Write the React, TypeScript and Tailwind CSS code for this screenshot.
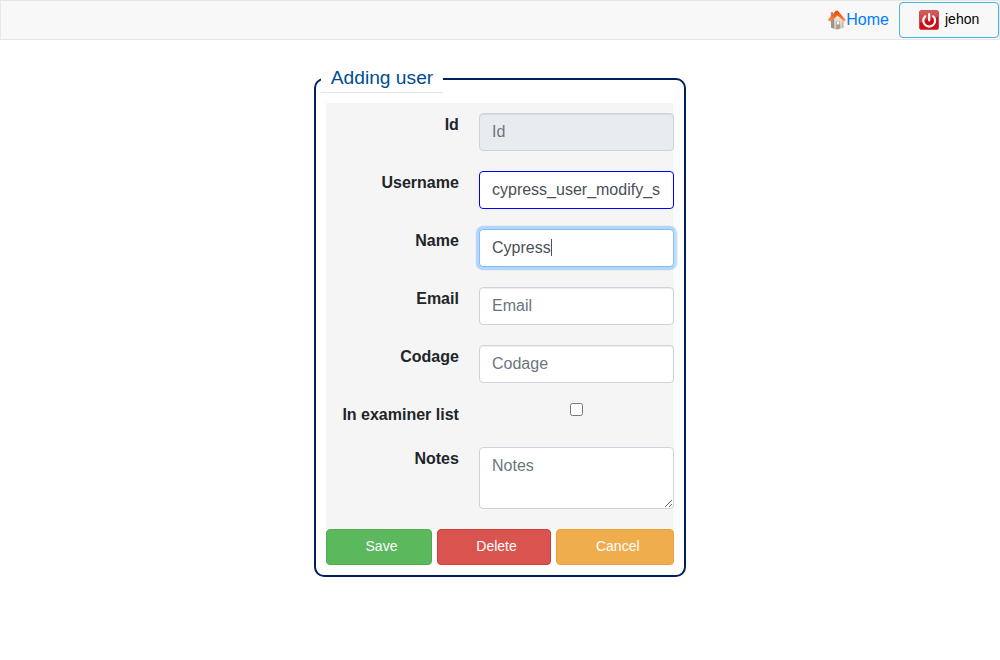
import React from "react";

const control =
  "block w-[195px] rounded border border-[#ced4da] bg-white px-3 text-base text-[#495057] placeholder-[#6c757d] shadow-[inset_0_1px_1px_rgba(0,0,0,0.075)] outline-none";

function Row({ label, children }: { label: string; children: React.ReactNode }) {
  return (
    <div className="flex items-start py-2.5">
      <label className="w-[132.9px] shrink-0 text-right text-base leading-6 font-bold text-[#212529]">{label}</label>
      <div className="relative ml-[20.1px] w-[195px]">{children}</div>
    </div>
  );
}

function HouseIcon() {
  return (
    <svg width="18" height="20" viewBox="0 0 18 20" className="overflow-visible" aria-hidden="true">
      <defs>
        <linearGradient id="roof" x1="0" y1="0" x2="0" y2="1">
          <stop offset="0" stopColor="#e8430c" />
          <stop offset="0.5" stopColor="#f36a24" />
          <stop offset="1" stopColor="#fa9a5c" />
        </linearGradient>
        <linearGradient id="wall" x1="0" y1="0" x2="0" y2="1">
          <stop offset="0" stopColor="#f1eeea" />
          <stop offset="1" stopColor="#c9c4bd" />
        </linearGradient>
      </defs>
      <path d="M2.8 2.2h2.2v4H2.8z" fill="#a08e86" />
      <path d="M8.8 4 15.2 10.5v7.6L8 19.6l-5-2.2V10z" fill="url(#wall)" />
      <path d="M3 10.5 6.2 7v11.8L3 17.4z" fill="#9a948f" />
      <path d="M8.2 11.4h3.8v7.3l-3.8.8z" fill="#b49d7b" />
      <path d="M8.9 11.6h2.4v2.8H8.9z" fill="#fffaf0" />
      <path d="M15 11v6.9" stroke="#aaa49e" strokeWidth=".8" />
      <path d="M7.8.8h2L17.8 10l-2 1.8-6.4-6-6.8 6L-.3 10z" fill="url(#roof)" />
      <path d="m9.6 5.8 6.2 5.8" stroke="#fbd0b2" strokeWidth=".7" />
    </svg>
  );
}

function PowerIcon() {
  return (
    <svg width="20" height="20" viewBox="0 0 20 20" aria-hidden="true">
      <defs>
        <linearGradient id="power" x1="0" y1="0" x2="0" y2="1">
          <stop offset="0" stopColor="#c9393b" />
          <stop offset="0.55" stopColor="#c80c12" />
          <stop offset="1" stopColor="#d60d13" />
        </linearGradient>
      </defs>
      <rect x=".4" y=".4" width="19.2" height="19.2" rx="2.2" fill="url(#power)" stroke="#b84144" strokeWidth=".8" />
      <path d="M1 1h18v6Q9 7 1 13z" fill="#fff" opacity=".2" />
      <path d="M6.2 6.3a5.9 5.9 0 1 0 8 0" fill="none" stroke="#fff" strokeWidth="2.2" strokeLinecap="round" />
      <path d="M10.2 4v6.4" stroke="#fff" strokeWidth="2.2" strokeLinecap="round" />
    </svg>
  );
}

export default function App() {
  return (
    <div className="min-h-[660px] bg-white font-['Liberation_Sans',Arial,sans-serif]">
      <nav className="flex h-10 items-center justify-end border border-[#e7e7e7] bg-[#f8f8f8]">
        <a href="#" className="mr-2.5 flex items-center text-base leading-6 text-[#007bff]">
          <HouseIcon />
          <span>Home</span>
        </a>
        <button className="flex h-9 w-[100px] items-center rounded border border-[#46b8da] pl-[19px] text-sm text-black">
          <PowerIcon />
          <span className="ml-1.5 pb-0.5">jehon</span>
        </button>
      </nav>

      <main className="flex justify-center pt-[25px]">
        <fieldset className="w-[372px] rounded-[10px] border-2 border-[#001f60] px-[5px] pb-2.5">
          <legend className="h-7 border-b border-[#e5e5e5] px-[9.8px] text-[19.2px] leading-[26px] text-[#004b91]">
            Adding user
          </legend>
          <div className="mx-[5px] mt-2.5">
            <div className="w-[348px] bg-[#f5f5f5] pb-2.5">
              <Row label="Id">
                <input disabled placeholder="Id" className={`${control} h-[38px] bg-[#e9ecef]!`} />
              </Row>
              <Row label="Username">
                <input defaultValue="cypress_user_modify_s" className={`${control} h-[38px] border-[#0000ff]! shadow-none!`} />
              </Row>
              <Row label="Name">
                <input
                  defaultValue="Cypress"
                  className={`${control} h-[38px] border-[#80bdff]! shadow-[0_0_0_3.2px_rgba(0,123,255,0.25)]!`}
                />
                <span className="absolute top-2.5 left-[72px] h-[17px] w-px bg-[#495057]" />
              </Row>
              <Row label="Email">
                <input placeholder="Email" className={`${control} h-[38px]`} />
              </Row>
              <Row label="Codage">
                <input placeholder="Codage" className={`${control} h-[38px]`} />
              </Row>
              <Row label="In examiner list">
                <input type="checkbox" className="mx-auto block size-[13px]" />
              </Row>
              <Row label="Notes">
                <textarea placeholder="Notes" className={`${control} h-[62px] resize py-1.5 leading-6 shadow-none!`} />
              </Row>
            </div>
            <div className="flex gap-[5px] text-sm text-white">
              <button className="h-9 w-[106px] rounded border border-[#4cae4c] bg-[#5cb85c] pl-[5px] pb-0.5">Save</button>
              <button className="h-9 w-[114px] rounded border border-[#d43f3a] bg-[#d9534f] pl-[5px] pb-0.5">Delete</button>
              <button className="h-9 w-[118px] rounded border border-[#eea236] bg-[#f0ad4e] pl-[5.5px] pb-0.5">Cancel</button>
            </div>
          </div>
        </fieldset>
      </main>
    </div>
  );
}
